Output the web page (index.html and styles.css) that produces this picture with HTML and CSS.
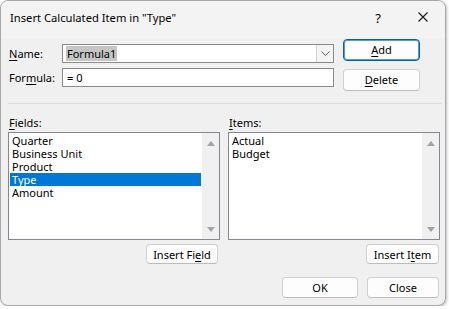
FILE: index.html
```html
<!DOCTYPE html>
<html lang="en">

<head>
    <meta charset="UTF-8">
    <title>Insert Calculated Item</title>
    <link rel="stylesheet" href="styles.css">
</head>

<body>
    <div class="dialog">
        <!-- Title Bar -->
        <div class="title-bar">
            <span class="title">Insert Calculated Item in "Type"</span>
            <span class="help">?</span>
            <svg class="close-x" width="10" height="10" viewBox="0 0 10 10">
                <path d="M0.5 0.5 L9.5 9.5 M9.5 0.5 L0.5 9.5" stroke="#1a1a1a" stroke-width="1.1" fill="none" />
            </svg>
        </div>

        <!-- Name / Formula -->
        <div class="top">
            <div class="form-col">
                <div class="form-row">
                    <label class="form-label"><u>N</u>ame:</label>
                    <div class="combo">
                        <span class="combo-text"><span class="selected-text">Formula1</span></span>
                        <span class="combo-btn">
                            <svg width="9" height="5" viewBox="0 0 9 5">
                                <path d="M0.5 0.5 L4.5 4.5 L8.5 0.5" stroke="#606060" stroke-width="1" fill="none" />
                            </svg>
                        </span>
                    </div>
                </div>
                <div class="form-row">
                    <label class="form-label">For<u>m</u>ula:</label>
                    <div class="text-input">= 0</div>
                </div>
            </div>
            <div class="button-col">
                <button class="btn btn-default"><u>A</u>dd</button>
                <button class="btn"><u>D</u>elete</button>
            </div>
        </div>

        <div class="separator"></div>

        <!-- Fields / Items -->
        <div class="lists">
            <div class="list-col">
                <div class="list-label"><u>F</u>ields:</div>
                <div class="listbox">
                    <div class="list-items">
                        <div class="list-item">Quarter</div>
                        <div class="list-item">Business Unit</div>
                        <div class="list-item">Product</div>
                        <div class="list-item selected">Type</div>
                        <div class="list-item">Amount</div>
                    </div>
                    <div class="scrollbar">
                        <span class="arrow-up"></span>
                        <span class="arrow-down"></span>
                    </div>
                </div>
                <div class="list-actions">
                    <button class="btn btn-small field-btn">Insert Fi<u>e</u>ld</button>
                </div>
            </div>
            <div class="list-col">
                <div class="list-label"><u>I</u>tems:</div>
                <div class="listbox">
                    <div class="list-items">
                        <div class="list-item">Actual</div>
                        <div class="list-item">Budget</div>
                    </div>
                    <div class="scrollbar">
                        <span class="arrow-up"></span>
                        <span class="arrow-down"></span>
                    </div>
                </div>
                <div class="list-actions item-actions">
                    <button class="btn btn-small item-btn">Insert I<u>t</u>em</button>
                </div>
            </div>
        </div>

        <!-- Footer Buttons -->
        <div class="footer">
            <button class="btn ok-btn">OK</button>
            <button class="btn close-btn">Close</button>
        </div>
    </div>
</body>

</html>
```

FILE: styles.css
```css
/* Base Styles */
body {
    margin: 0;
    padding: 0;
    background-color: #ffffff;
    font-family: 'Noto Sans', 'Open Sans', sans-serif;
    font-size: 11px;
    color: #000;
}

u {
    text-decoration-thickness: 1px;
    text-underline-offset: 2px;
}

.dialog {
    box-sizing: border-box;
    width: 446px;
    height: 306px;
    background-color: #f0f0f0;
    border: 1px solid #a8a8a8;
    border-radius: 8px;
    box-shadow: 1px 1px 3px rgba(0, 0, 0, 0.25);
    overflow: hidden;
}

/* Title Bar */
.title-bar {
    height: 38px;
    display: flex;
    align-items: flex-start;
    padding-top: 9px;
    box-sizing: border-box;
    background-color: #f3f3f3;
}

.title {
    margin-left: 9px;
    font-size: 11.2px;
    line-height: 16px;
    flex: 1;
}

.help {
    font-size: 13px;
    line-height: 16px;
    margin-right: 37px;
}

.close-x {
    margin-top: 2px;
    margin-right: 17px;
}

/* Name / Formula */
.top {
    display: flex;
    padding-left: 8px;
}

.form-col {
    display: flex;
    flex-direction: column;
    gap: 5px;
    margin-top: 5px;
}

.form-row {
    display: flex;
    align-items: center;
}

.form-label {
    width: 53px;
    line-height: 19px;
}

.combo,
.text-input {
    box-sizing: border-box;
    width: 272px;
    height: 19px;
    background-color: #fff;
    border: 1px solid #8a8a8a;
    display: flex;
    align-items: center;
    line-height: 15px;
}

.text-input {
    padding-left: 4px;
}

.combo-text {
    flex: 1;
    padding-left: 3px;
}

.selected-text {
    background-color: #c6c6c6;
    padding: 0 1px;
}

.combo-btn {
    box-sizing: border-box;
    width: 17px;
    height: 17px;
    background-color: #f4f4f4;
    border-left: 1px solid #d2d2d2;
    display: flex;
    align-items: center;
    justify-content: center;
}

.button-col {
    display: flex;
    flex-direction: column;
    gap: 8px;
    margin-left: 9px;
}

/* Buttons */
.btn {
    box-sizing: border-box;
    font-family: inherit;
    font-size: 11px;
    color: #000;
    background-color: #fdfdfd;
    border: 1px solid #d0d0d0;
    border-bottom-color: #bcbcbc;
    border-radius: 4px;
    padding: 0;
    margin: 0;
    width: 77px;
    height: 22px;
    line-height: 18px;
    text-align: center;
}

.btn-default {
    border-color: #005fb8;
    box-shadow: inset 0 0 0 1px #5a98d6;
}

.separator {
    height: 1px;
    background-color: #dadada;
    margin: 12px 0 0 7px;
    width: 433px;
}

/* Fields / Items */
.lists {
    display: flex;
    gap: 8px;
    padding-left: 7px;
    margin-top: 14px;
}

.list-col {
    width: 212px;
    display: flex;
    flex-direction: column;
}

.list-label {
    height: 14px;
    line-height: 10px;
    padding-left: 1px;
}

.listbox {
    box-sizing: border-box;
    height: 108px;
    border: 1px solid #828790;
    background-color: #fff;
    display: flex;
}

.list-items {
    flex: 1;
    padding: 1px 1px 0 1px;
}

.list-item {
    height: 13px;
    line-height: 13px;
    padding-left: 2px;
}

.list-item.selected {
    background-color: #0078d7;
    color: #fff;
}

.scrollbar {
    width: 17px;
    background-color: #f0f0f0;
    display: flex;
    flex-direction: column;
    justify-content: space-between;
    align-items: center;
    padding: 8px 0 7px 0;
}

.arrow-up,
.arrow-down {
    width: 0;
    height: 0;
    border-left: 4px solid transparent;
    border-right: 4px solid transparent;
}

.arrow-up {
    border-bottom: 5px solid #a3a3a3;
}

.arrow-down {
    border-top: 5px solid #a3a3a3;
}

.list-actions {
    display: flex;
    justify-content: flex-end;
    margin-top: 4px;
    padding-right: 2px;
}

.item-actions {
    padding-right: 1px;
}

.btn-small {
    height: 20px;
    line-height: 17px;
}

.field-btn {
    width: 72px;
}

.item-btn {
    width: 73px;
}

/* Footer */
.footer {
    display: flex;
    justify-content: flex-end;
    gap: 9px;
    margin-top: 13px;
    padding-right: 6px;
}

.ok-btn {
    width: 76px;
    height: 21px;
}

.close-btn {
    width: 72px;
    height: 21px;
}
```
